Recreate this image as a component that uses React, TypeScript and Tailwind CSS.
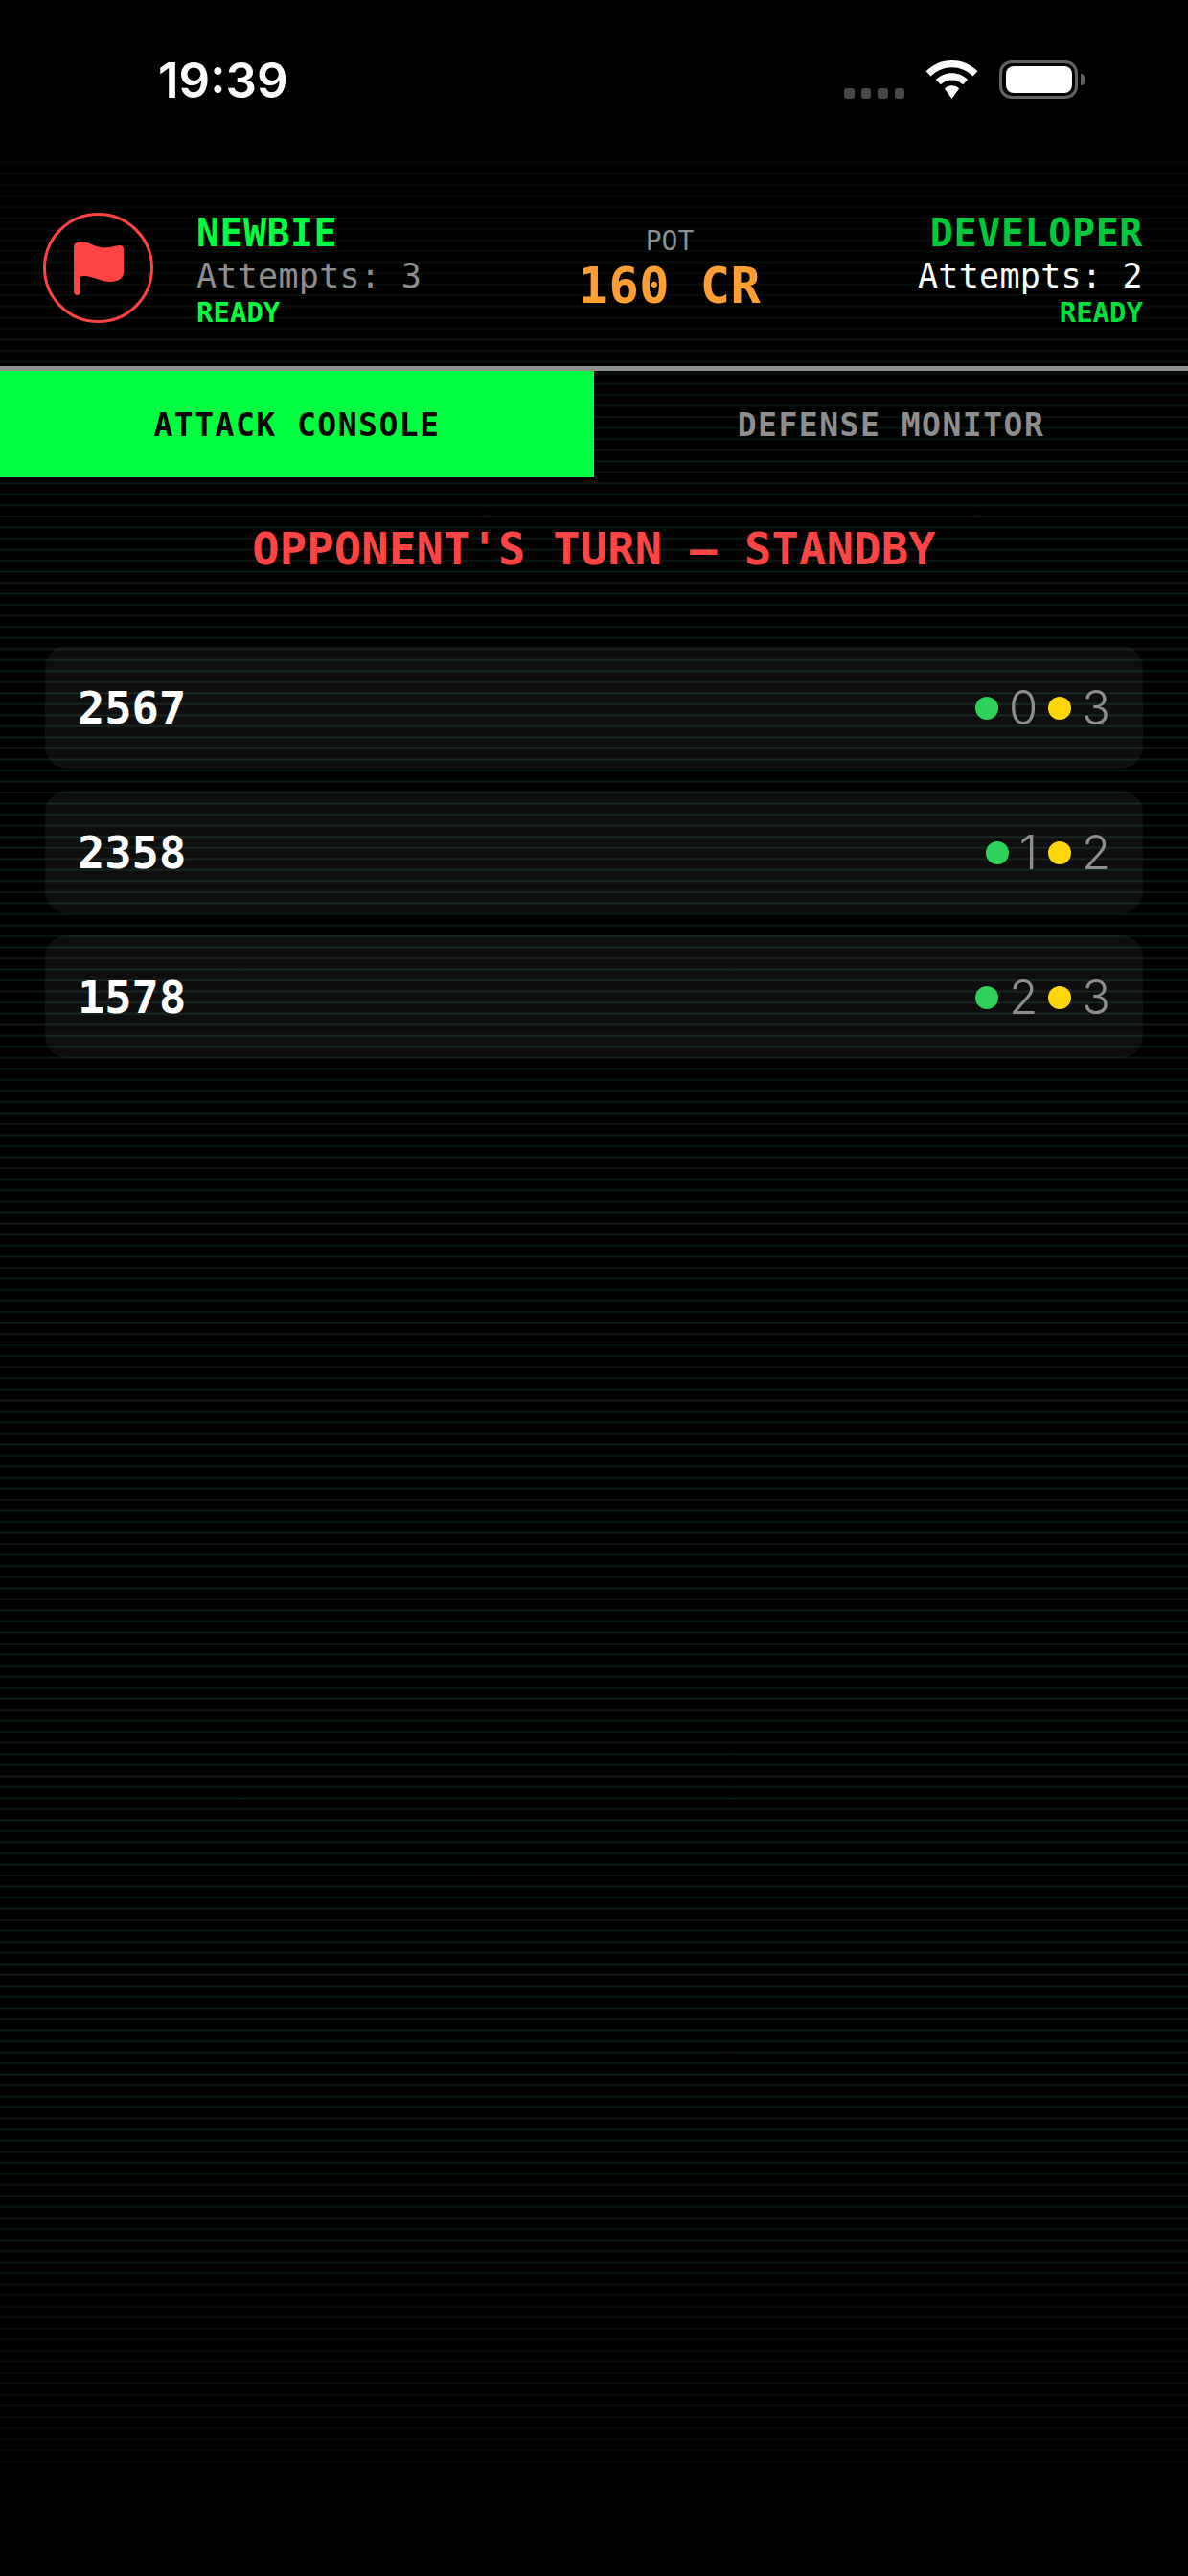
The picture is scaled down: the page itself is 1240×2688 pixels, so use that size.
import { Fragment } from "react";

const mono = "font-['DejaVu_Sans_Mono','Liberation_Mono',monospace]";

const guesses = [
  { code: "2567", bulls: 0, cows: 3 },
  { code: "2358", bulls: 1, cows: 2 },
  { code: "1578", bulls: 2, cows: 3 },
];

function StatusBar() {
  return (
    <div className="flex h-[170px] items-start justify-between pl-[165px] pr-[108px] pt-[56px]">
      <span className="font-['Inter',sans-serif] text-[51px] leading-[56px] font-semibold text-white">
        19:39
      </span>
      <div className="flex items-end pt-[7px]">
        <div className="flex gap-[7px]">
          {[0, 1, 2, 3].map((i) => (
            <span key={i} className="h-[11px] w-[10.500px] rounded-[3px] bg-[#48484a]" />
          ))}
        </div>
        <svg className="ml-[22px]" width="55" height="40" viewBox="0 0 55 41" fill="#fff">
          <path d="M27.5 0C17 0 7.5 4 0 11.5l5 5.5C11 11 19 7.5 27.5 7.5S44 11 50 17l5-5.500C47.500 4 38 0 27.500 0z" />
          <path d="M27.500 13.500c-6.500 0-12.500 2.500-17 7l5 5.500c3-3 7.500-5 12-5s9 2 12 5l5-5.500c-4.500-4.500-10.500-7-17-7z" />
          <path d="M27.500 27c-3 0-5.800 1.200-7.800 3.200L27.500 41l7.800-10.800C33.300 28.200 30.500 27 27.500 27z" />
        </svg>
        <div className="ml-[22px] flex items-center">
          <div className="flex h-[40px] w-[82px] items-center justify-center rounded-[13px] border-[3.500px] border-[#636366]">
            <div className="h-[28px] w-[69px] rounded-[8px] bg-white" />
          </div>
          <div className="ml-[3px] h-[12px] w-[4px] rounded-r-full bg-[#636366]" />
        </div>
      </div>
    </div>
  );
}

function Header() {
  return (
    <div className={`flex h-[212px] items-start justify-between pl-[45px] pr-[47px] pt-[50px] ${mono}`}>
      <div className="flex items-start gap-[45px]">
        <div className="mt-[2px] flex h-[115px] w-[115px] items-center justify-center rounded-full border-[3px] border-[#ff4444]">
          <svg width="52" height="56" viewBox="0 0 52 56" fill="#ff4444">
            <path d="M0 6C0 2 3 0 7 0C16 0 22 6.500 33 6.500C39 6.500 43 4 48 4C50.500 4 52 5.500 52 8V32C52 38 47 42 38 42C28 42 20 36 11 36C9.500 36 8 36.300 7 36.800V52C7 54.500 5.500 56 3.500 56C1.500 56 0 54.500 0 52Z" />
          </svg>
        </div>
        <div className="flex flex-col">
          <span className="text-[40px] leading-[46px] font-bold tracking-[0.400px] text-[#00ff41]">NEWBIE</span>
          <span className="text-[35px] leading-[44px] tracking-[0.300px] text-[#8e8e8e]">Attempts: 3</span>
          <span className="text-[29px] leading-[32px] font-bold text-[#00ff41]">READY</span>
        </div>
      </div>
      <div className="flex flex-col items-center pt-[16px]">
        <span className="text-[28px] leading-[32px] text-[#8e8e8e]">POT</span>
        <span className="text-[52px] leading-[60px] font-bold tracking-[0.500px] text-[#ff9f33]">160 CR</span>
      </div>
      <div className="flex flex-col items-end">
        <span className="text-[40px] leading-[46px] font-bold tracking-[0.600px] text-[#00c93a]">DEVELOPER</span>
        <span className="text-[35px] leading-[44px] tracking-[0.300px] text-white">Attempts: 2</span>
        <span className="text-[29px] leading-[32px] font-bold text-[#00e03a]">READY</span>
      </div>
    </div>
  );
}

function Tabs() {
  return (
    <div className={`border-t-[5px] border-[#8e9090] ${mono}`}>
      <div className="grid h-[111px] grid-cols-2 text-[33px] font-bold tracking-[1.500px]">
        <div className="flex items-center justify-center bg-[#00ff41] pt-[2px] text-black">ATTACK CONSOLE</div>
        <div className="flex items-center justify-center pt-[2px] text-[#8e8e8e]">DEFENSE MONITOR</div>
      </div>
    </div>
  );
}

function GuessRow({ code, bulls, cows }: { code: string; bulls: number; cows: number }) {
  return (
    <div className="flex h-[128px] items-center justify-between rounded-[23px] bg-white/[0.055] px-[34px] pt-[2px]">
      <span className={`text-[47px] font-bold text-white ${mono}`}>{code}</span>
      <div className="flex items-center gap-[11px] font-['Inter',sans-serif] text-[49px] font-light text-[#8e8e8e]">
        {[
          { color: "bg-[#30d158]", value: bulls },
          { color: "bg-[#ffd60a]", value: cows },
        ].map((item, i) => (
          <Fragment key={i}>
            <span className={`h-[24px] w-[24px] rounded-full ${item.color}`} />
            <span>{item.value}</span>
          </Fragment>
        ))}
      </div>
    </div>
  );
}

export default function App() {
  return (
    <div className="relative h-[2688px] w-[1240px] overflow-hidden bg-black">
      {/* CRT scanlines, behind the content */}
      <div className="pointer-events-none absolute inset-x-0 top-[160px] h-[2413px] bg-[repeating-linear-gradient(to_bottom,transparent_0px,transparent_8px,rgba(30,70,55,0.42)_10px,transparent_11.530px)] [mask-image:linear-gradient(to_bottom,rgba(0,0,0,0.3),#000_15%,#000_85%,rgba(0,0,0,0.3))]" />
      <div className="relative">
        <StatusBar />
        <Header />
        <Tabs />
        <div className={`pt-[48px] text-center text-[47px] leading-[54px] font-bold tracking-[0.250px] text-[#ff4444] ${mono}`}>
          OPPONENT'S TURN — STANDBY
        </div>
        <div className="mt-[74px] flex flex-col gap-[23px] px-[47px]">
          {guesses.map((g) => (
            <GuessRow key={g.code} {...g} />
          ))}
        </div>
      </div>
    </div>
  );
}
